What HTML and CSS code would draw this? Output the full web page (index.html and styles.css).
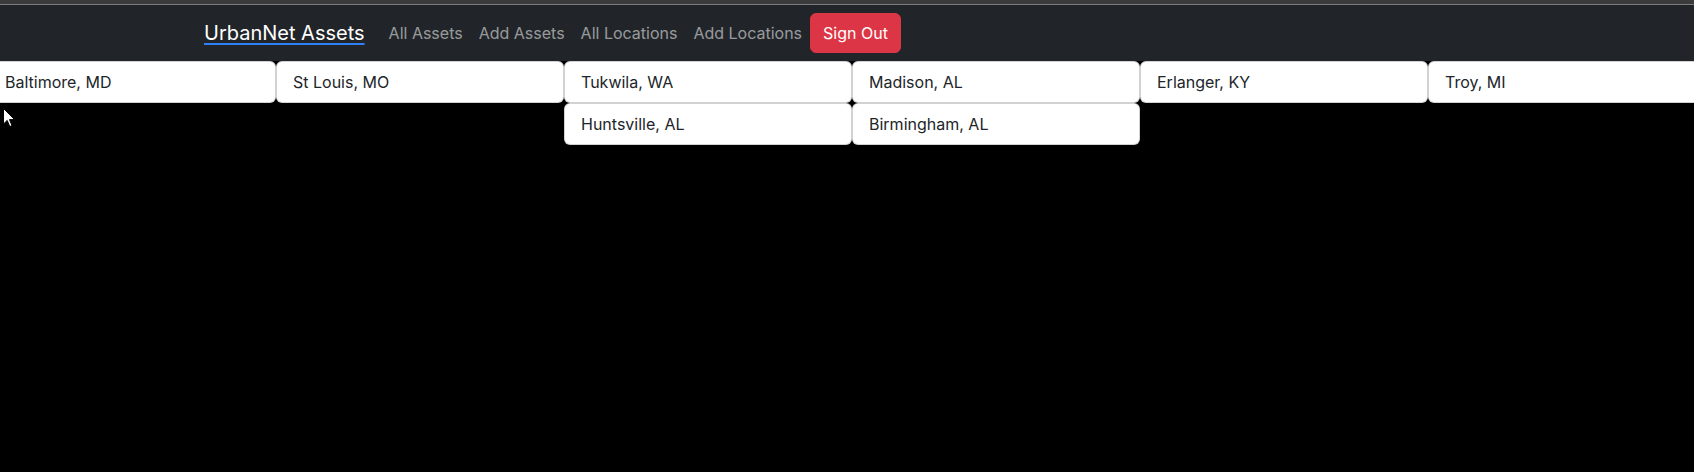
FILE: index.html
```html
<!DOCTYPE html>
<html lang="en">
<head>
<meta charset="utf-8">
<title>UrbanNet Assets</title>
<link rel="stylesheet" href="styles.css">
</head>
<body>
<div class="page">
  <div class="chrome"></div>
  <nav class="navbar">
    <div class="container">
      <a class="brand" href="#">UrbanNet Assets</a>
      <ul class="nav">
        <li><a class="nav-link" href="#">All Assets</a></li>
        <li><a class="nav-link" href="#">Add Assets</a></li>
        <li><a class="nav-link" href="#">All Locations</a></li>
        <li><a class="nav-link" href="#">Add Locations</a></li>
      </ul>
      <button class="btn-danger" type="button">Sign Out</button>
    </div>
  </nav>
  <div class="locations">
    <div class="loc">Baltimore, MD</div>
    <div class="loc">St Louis, MO</div>
    <div class="loc">Tukwila, WA</div>
    <div class="loc">Madison, AL</div>
    <div class="loc">Erlanger, KY</div>
    <div class="loc">Troy, MI</div>
    <div class="loc">Huntsville, AL</div>
    <div class="loc">Birmingham, AL</div>
  </div>
  <svg class="cursor" width="13" height="20" viewBox="0 0 13 20" aria-hidden="true">
    <path d="M0.5 0.5 L0.5 16 L4.2 12.4 L6.8 18.6 L9 17.6 L6.5 11.6 L11.6 11.6 Z" fill="#fff" stroke="#000" stroke-width="1"/>
  </svg>
</div>
</body>
</html>
```
FILE: styles.css
```css
html, body {
  margin: 0;
  padding: 0;
  overflow: hidden;
  background: #000;
}

body {
  font-family: Inter, "Noto Sans", "Liberation Sans", sans-serif;
  font-size: 16px;
  line-height: 24px;
  color: #212529;
}

.page {
  width: 1704px;
  position: relative;
  min-height: 472px;
}

.chrome {
  height: 4px;
  background: #3b3b3b;
  border-bottom: 1px solid #7d7d7d;
}

.navbar {
  background: #212529;
  padding: 8px 0;
}

.container {
  box-sizing: border-box;
  max-width: 1320px;
  margin: 0 auto;
  padding: 0 12px;
  display: flex;
  align-items: center;
}

.brand {
  color: #fff;
  font-size: 20px;
  line-height: 30px;
  margin-right: 16px;
  text-decoration: underline;
  text-decoration-color: #2f7ff5;
  text-underline-offset: 3px;
}

.nav {
  list-style: none;
  margin: 0;
  padding: 0;
  display: flex;
}

.nav-link {
  display: block;
  padding: 8px;
  color: rgba(255, 255, 255, 0.55);
  text-decoration: none;
}

.btn-danger {
  font-family: inherit;
  font-size: 16px;
  line-height: 24px;
  color: #fff;
  background: #dc3545;
  border: 1px solid #dc3545;
  border-radius: 6px;
  padding: 7px 12px;
  cursor: pointer;
}

.locations {
  display: flex;
  flex-wrap: wrap;
  justify-content: center;
  margin: 0 -12px;
}

.loc {
  flex: 0 0 16.6667%;
  box-sizing: border-box;
  background: #fff;
  border: 1px solid rgba(0, 0, 0, 0.175);
  border-radius: 6px;
  padding: 8px 16px;
}

.cursor {
  position: absolute;
  left: 3px;
  top: 108px;
}
```
